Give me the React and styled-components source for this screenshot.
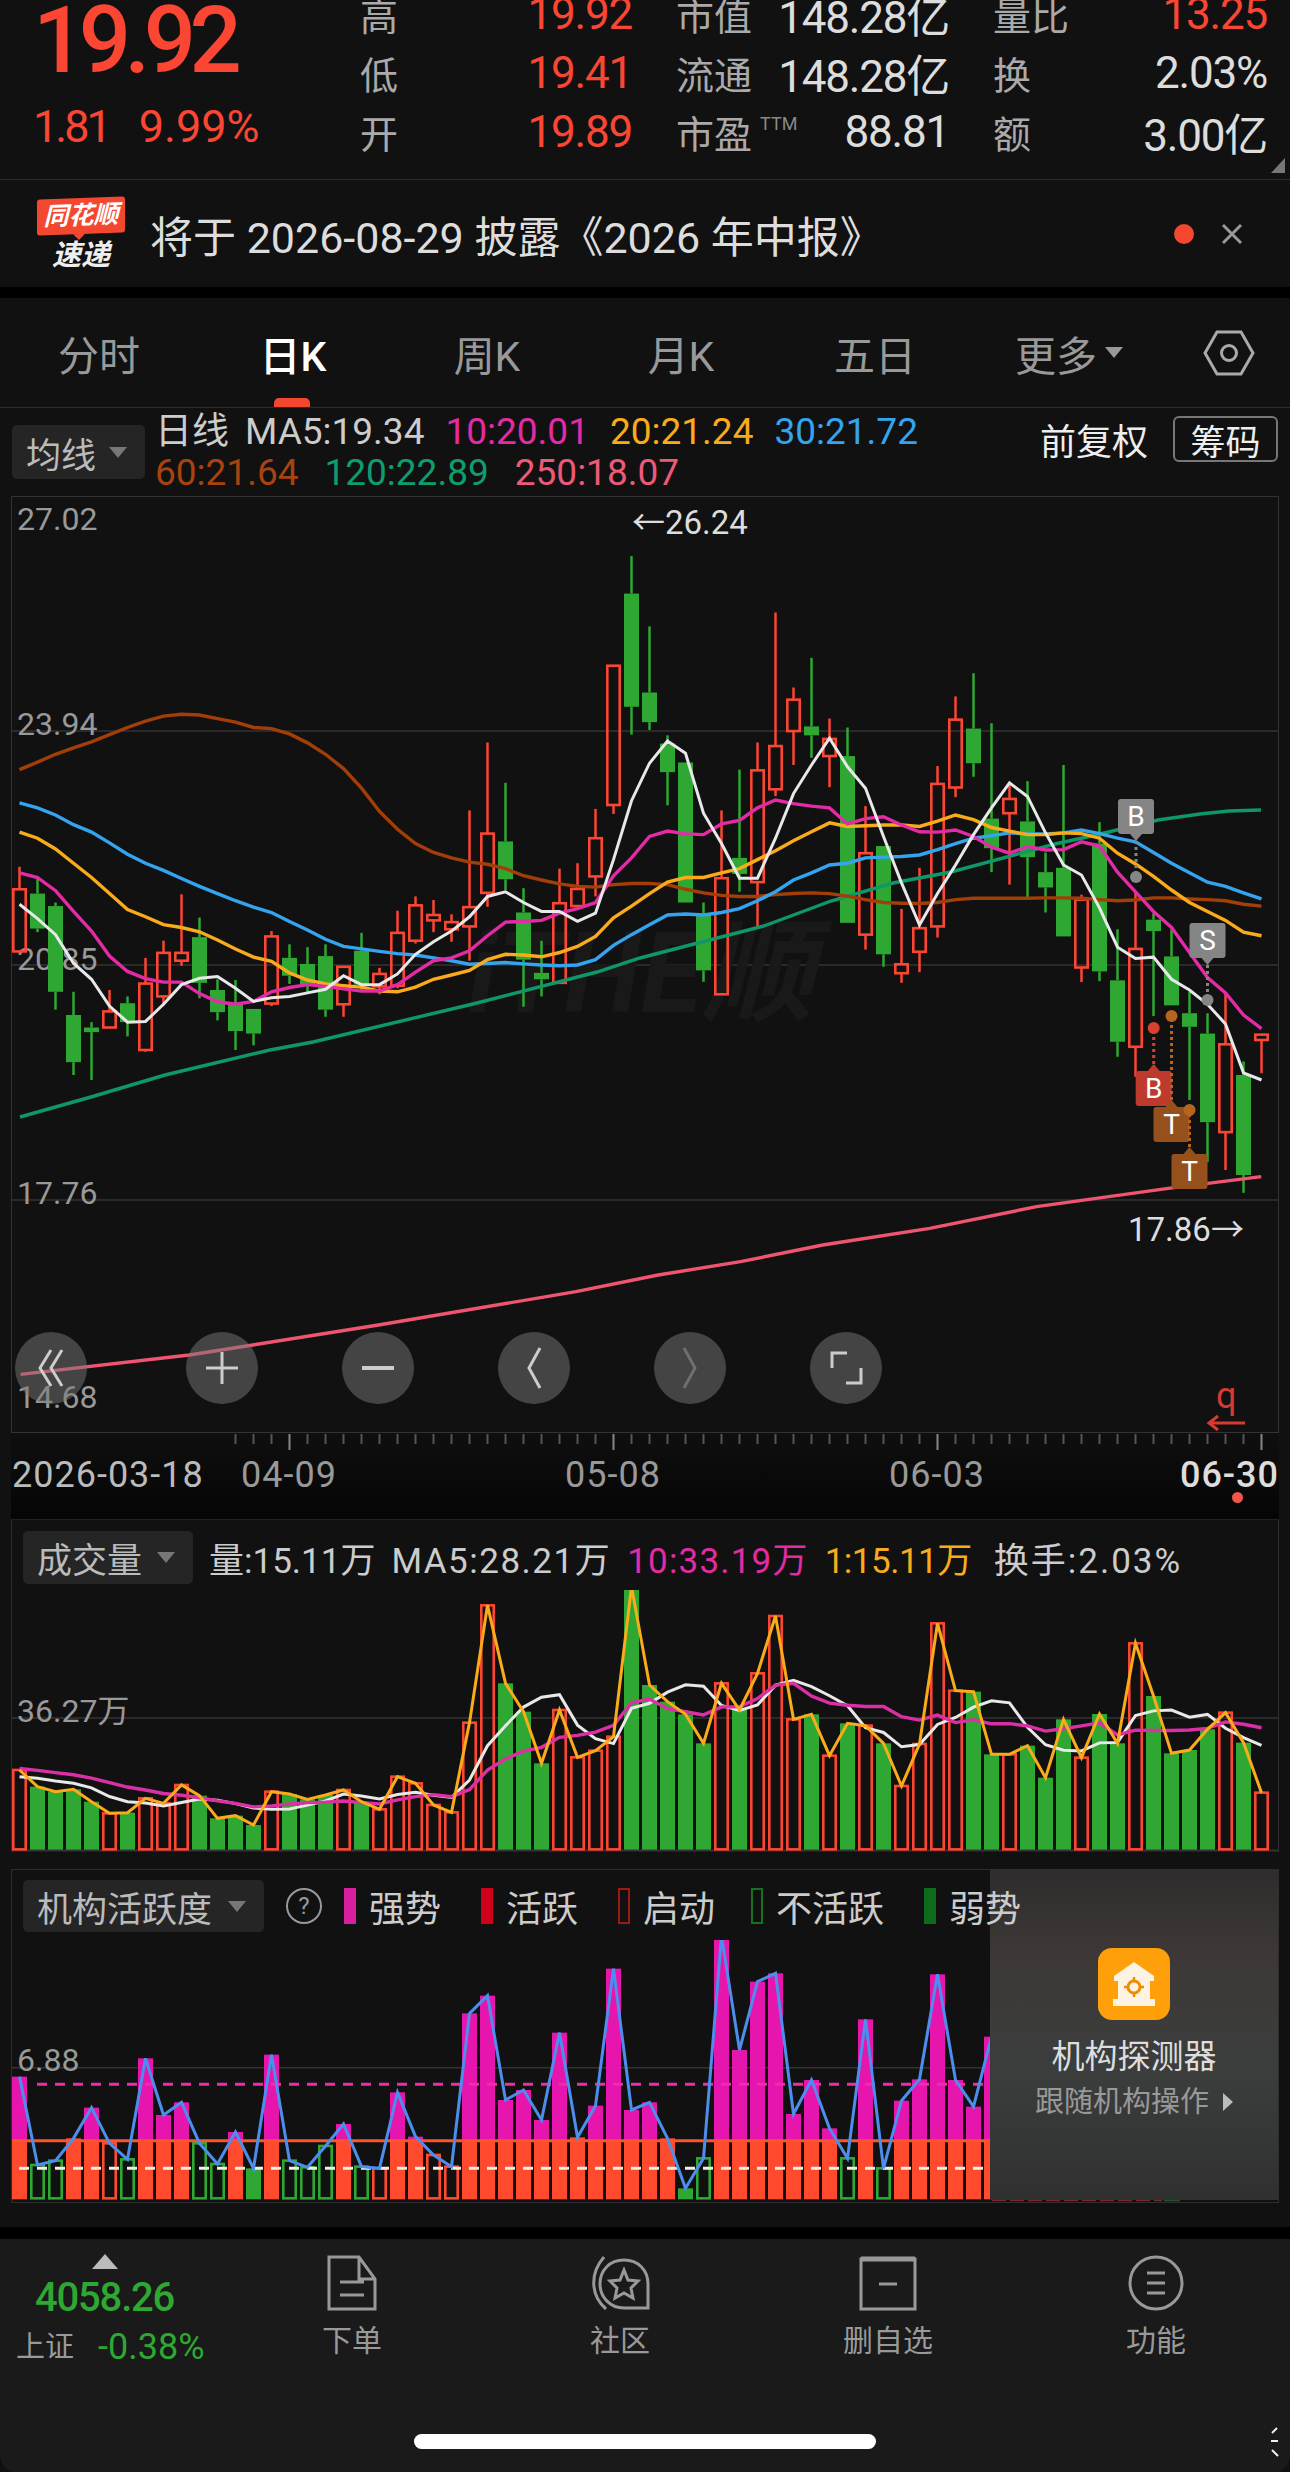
import React from "react";
import styled, { createGlobalStyle } from "styled-components";

// sampled from the screenshot: chart values are kept in crop units and mapped to page pixels
const cx = (i) => 19.5 + 18 * i;
const ky = (z) => 490 + z / 2.8;
const vy = (z) => 1520 + z / 3;
const ay = (z) => 1860 + z / 3;

const RED = "#fa4632";
const GREEN = "#2ea832";

const CANDLES = [
  ["r", 1055, 1118, 1292, 1292], ["g", 1085, 1130, 1228, 1238], ["g", 1155, 1165, 1405, 1455], ["g", 1405, 1470, 1602, 1638],
  ["g", 1490, 1505, 1518, 1652], ["r", 1400, 1460, 1505, 1505], ["g", 1418, 1437, 1490, 1530], ["r", 1310, 1382, 1568, 1573],
  ["r", 1262, 1296, 1418, 1443], ["r", 1132, 1296, 1318, 1332], ["g", 1197, 1252, 1380, 1423], ["g", 1370, 1400, 1462, 1485],
  ["g", 1372, 1440, 1515, 1568], ["g", 1453, 1453, 1522, 1555], ["r", 1235, 1250, 1438, 1445], ["g", 1272, 1310, 1360, 1383],
  ["g", 1280, 1327, 1385, 1410], ["g", 1272, 1305, 1455, 1475], ["r", 1335, 1335, 1440, 1475], ["g", 1240, 1290, 1385, 1400],
  ["r", 1338, 1355, 1390, 1412], ["r", 1178, 1240, 1388, 1395], ["r", 1138, 1163, 1262, 1270], ["r", 1148, 1190, 1205, 1238],
  ["r", 1188, 1210, 1230, 1265], ["r", 897, 1168, 1222, 1318], ["r", 707, 962, 1128, 1167], ["g", 820, 984, 1090, 1120],
  ["g", 1115, 1183, 1315, 1447], ["g", 1262, 1352, 1370, 1418], ["r", 1060, 1157, 1380, 1382], ["r", 1045, 1117, 1165, 1165],
  ["r", 893, 975, 1082, 1138], ["r", 492, 492, 882, 907], ["g", 185, 290, 607, 685], ["g", 382, 567, 650, 672],
  ["g", 687, 710, 790, 883], ["g", 763, 763, 1155, 1155], ["g", 1155, 1190, 1345, 1377], ["r", 897, 1087, 1412, 1412],
  ["g", 783, 1030, 1075, 1125], ["r", 707, 785, 1098, 1222], ["r", 343, 717, 838, 857], ["r", 553, 587, 675, 770],
  ["g", 470, 662, 687, 750], ["r", 640, 697, 745, 832], ["g", 665, 745, 1212, 1212], ["r", 885, 1017, 1245, 1287],
  ["g", 997, 997, 1300, 1335], ["r", 1173, 1328, 1353, 1380], ["r", 1058, 1227, 1293, 1350], ["r", 773, 823, 1222, 1253],
  ["r", 578, 643, 833, 860], ["g", 513, 668, 765, 803], ["g", 653, 920, 1003, 1070], ["r", 820, 865, 905, 1105],
  ["g", 815, 928, 1028, 1140], ["g", 1015, 1070, 1113, 1183], ["g", 770, 1058, 1250, 1250], ["r", 1133, 1147, 1337, 1378],
  ["g", 930, 990, 1348, 1375], ["g", 1230, 1373, 1545, 1587], ["r", 1125, 1285, 1559, 1643], ["g", 1185, 1203, 1235, 1473],
  ["g", 1230, 1306, 1443, 1443], ["g", 1405, 1465, 1503, 1708], ["g", 1465, 1522, 1770, 1882], ["r", 1405, 1552, 1798, 1904],
  ["g", 1600, 1638, 1918, 1968], ["r", 1525, 1525, 1540, 1633],
];

const MA5 = [1160,1200,1245,1325,1370,1445,1490,1488,1440,1385,1367,1362,1395,1432,1422,1418,1408,1398,1360,1385,1385,1355,1300,1265,1235,1195,1138,1125,1155,1180,1180,1208,1185,1035,870,765,703,737,905,990,1087,1087,975,850,770,695,775,835,970,1100,1218,1130,1050,965,890,820,858,960,1050,1078,1170,1280,1312,1308,1370,1400,1440,1495,1632,1652];
const MA10 = [1072,1085,1122,1180,1235,1305,1348,1368,1378,1378,1410,1433,1440,1432,1405,1393,1385,1390,1397,1403,1403,1385,1350,1318,1310,1290,1248,1210,1208,1205,1185,1172,1155,1080,1030,970,955,963,965,935,925,890,868,878,885,890,935,920,915,938,957,958,952,970,1000,1017,998,1008,1007,985,997,1070,1125,1180,1225,1295,1365,1408,1470,1508];
const MA20 = [958,975,1005,1045,1085,1130,1175,1195,1217,1225,1237,1260,1285,1308,1320,1352,1372,1383,1388,1392,1403,1405,1392,1370,1358,1345,1315,1300,1302,1307,1295,1278,1250,1198,1165,1130,1098,1085,1085,1072,1060,1035,1010,982,957,932,942,940,938,938,942,927,910,923,945,955,965,965,960,962,975,1017,1047,1082,1120,1155,1180,1205,1238,1248];
const MA30 = [876,890,910,937,958,988,1020,1045,1065,1088,1110,1130,1150,1168,1183,1208,1232,1258,1278,1285,1292,1298,1302,1310,1318,1328,1326,1323,1327,1330,1332,1330,1315,1275,1245,1217,1190,1187,1190,1183,1172,1150,1125,1092,1072,1050,1045,1030,1028,1026,1022,1007,990,975,968,960,963,963,960,952,962,975,985,1015,1045,1072,1098,1110,1128,1145];
const MA60 = [783,762,740,722,705,685,665,647,633,628,630,640,650,665,668,683,708,740,780,835,900,950,990,1015,1030,1042,1048,1060,1080,1092,1103,1110,1112,1105,1102,1102,1105,1118,1128,1135,1138,1138,1133,1130,1128,1130,1137,1147,1155,1157,1158,1155,1147,1143,1143,1143,1143,1142,1142,1143,1147,1150,1148,1142,1142,1145,1147,1150,1160,1165];
const MA120 = [[20,1117],[91,1097],[165,1075],[270,1050],[313,1042],[473,1004],[597,972],[640,958],[694,944],[764,926],[831,901],[893,883],[951,872],[1055,844],[1096,835],[1158,820],[1200,814],[1229,811],[1261,810]];
const MA250 = [[25,1003],[230,945],[460,855],[700,755],[800,705],[900,665],[1000,615],[1130,565],[1260,500],[1420,445],[1533,410]];

const VOL = [750,800,815,808,845,880,878,835,850,795,827,895,887,915,815,822,838,825,810,845,868,770,790,855,877,608,256,490,575,730,570,712,692,650,200,495,545,583,670,490,570,460,288,598,583,707,610,617,670,798,672,310,512,515,703,703,677,773,598,713,582,670,370,528,700,690,628,578,668,818];

// moving average of the bar tops, the pane's first bars lean on earlier days
const average = (list, n, seed) =>
  list.map((_, i) => {
    let sum = 0;
    for (let k = i - n + 1; k <= i; k++) sum += k >= 0 ? list[k] : seed ?? list[0];
    return sum / n;
  });
const VOL_MA5 = average(VOL, 5, 775);
const VOL_MA10 = average(VOL, 10, 745);

// p strong, s solid red, h hollow red, o hollow green, g solid green
const ACTIVITY = [
  ["p",650],["o",915],["o",902],["s",835],["p",743],["h",850],["o",898],["p",595],["p",765],["p",727],["o",850],["o",912],["p",816],["g",925],
  ["p",584],["o",902],["o",922],["o",858],["p",792],["o",920],["h",925],["p",697],["p",830],["h",885],["h",920],["p",460],["p",407],["p",720],
  ["p",690],["p",780],["p",518],["s",832],["p",737],["p",326],["p",750],["p",727],["s",835],["g",985],["o",895],["p",228],["p",570],["p",365],
  ["p",340],["p",762],["p",660],["p",805],["o",895],["p",478],["o",925],["p",722],["p",658],["p",343],["p",660],["p",740],["p",530],
];

const toPoints = (arr, fy) => arr.map((v, i) => `${cx(i)},${fy(v)}`).join(" ");

const GlobalStyle = createGlobalStyle`
  html, body { margin: 0; background: #000; }
  body {
    font-family: Roboto, "Noto Sans CJK SC", "Liberation Sans", sans-serif;
    color: #ccc;
  }
`;

const Page = styled.div`
  width: 1290px;
  height: 2472px;
  overflow: hidden;
  background: #111112;
`;

/* ---------- quote ---------- */
const Quote = styled.header`
  position: relative;
  display: flex;
  height: 179px;
  overflow: hidden;
  border-bottom: 1px solid #2c2c2c;
`;
const PriceBlock = styled.div`
  width: 360px;
  padding-left: 33px;
  box-sizing: border-box;
  flex: none;
`;
const BigPrice = styled.div`
  font-size: 92px;
  line-height: 82px;
  font-weight: 500;
  letter-spacing: -6.5px;
  color: ${RED};
`;
const Change = styled.div`
  display: flex;
  gap: 30px;
  margin-top: 22px;
  font-size: 45px;
  line-height: 46px;
  color: ${RED};
`;
const Tight = styled.span`
  letter-spacing: -3px;
`;
const QuoteGrid = styled.div`
  display: grid;
  grid-template-columns: 272px 273px 274px;
  grid-auto-rows: 59px;
  column-gap: 44px;
  margin-top: -16px;
`;
const Cell = styled.div`
  display: flex;
  align-items: center;
  justify-content: space-between;
`;
const CellLabel = styled.span`
  font-size: 38px;
  color: #aaa;
`;
const Ttm = styled.sup`
  margin-left: 8px;
  font-size: 18px;
  line-height: 0;
  color: #888;
  vertical-align: 18px;
`;
const CellValue = styled.span`
  font-size: 44px;
  letter-spacing: -1.2px;
  color: ${(p) => (p.$red ? RED : "#ddd")};
`;
const CornerMark = styled.i`
  position: absolute;
  right: 5px;
  bottom: 6px;
  border-left: 14px solid transparent;
  border-bottom: 15px solid #777;
`;

/* ---------- notice ---------- */
const Notice = styled.section`
  display: flex;
  align-items: center;
  height: 107px;
  padding: 0 46px 0 37px;
`;
const Logo = styled.div`
  width: 88px;
  flex: none;
  text-align: center;
`;
const LogoTop = styled.div`
  position: relative;
  height: 36px;
  border-radius: 3px;
  background: #f4472f;
  transform: skewY(-2deg);
  font-size: 25px;
  line-height: 36px;
  font-weight: 700;
  font-style: italic;
  color: #fff;
  &::after {
    content: "";
    position: absolute;
    left: 36px;
    bottom: -6px;
    border: 6px solid transparent;
    border-top-color: #f4472f;
    border-bottom: 0;
  }
`;
const LogoBottom = styled.div`
  margin-top: 6px;
  font-size: 29px;
  line-height: 30px;
  font-weight: 700;
  font-style: italic;
  color: #eee;
`;
const NoticeText = styled.div`
  margin-left: 25px;
  font-size: 43px;
  color: #ddd;
  white-space: nowrap;
`;
const NoticeDot = styled.i`
  width: 20px;
  height: 20px;
  margin-left: auto;
  border-radius: 50%;
  background: #f4472f;
`;
const NoticeClose = styled.svg`
  width: 24px;
  height: 24px;
  margin-left: 26px;
`;
const BlackGap = styled.div`
  height: ${(p) => p.$h}px;
  background: #000;
`;

/* ---------- tabs ---------- */
const TabRow = styled.nav`
  display: grid;
  grid-template-columns: repeat(6, 194px) 1fr;
  align-items: center;
  height: 109px;
  padding-left: 2px;
  border-bottom: 1px solid #2c2c2c;
`;
const Tab = styled.div`
  position: relative;
  display: flex;
  align-items: center;
  justify-content: center;
  gap: 8px;
  height: 109px;
  font-size: 41px;
  font-weight: ${(p) => (p.$active ? 500 : 400)};
  color: ${(p) => (p.$active ? "#fff" : "#999")};
  ${(p) =>
    p.$active &&
    `&::after {
      content: "";
      position: absolute;
      left: 78px;
      bottom: 0;
      width: 36px;
      height: 9px;
      border-radius: 5px 5px 0 0;
      background: #f4472f;
    }`}
`;
const Caret = styled.i`
  flex: none;
  border-left: ${(p) => p.$w}px solid transparent;
  border-right: ${(p) => p.$w}px solid transparent;
  border-top: ${(p) => p.$h}px solid ${(p) => p.$color || "#777"};
`;
const GearIcon = styled.svg`
  width: 52px;
  height: 48px;
  margin-left: 37px;
`;

/* ---------- legends ---------- */
const MaBar = styled.div`
  display: flex;
  height: 88px;
  padding: 0 12px;
  box-sizing: border-box;
`;
const Selector = styled.div`
  display: flex;
  align-items: center;
  justify-content: space-between;
  box-sizing: border-box;
  flex: none;
  height: ${(p) => p.$h}px;
  width: ${(p) => p.$w}px;
  padding: 0 18px 0 14px;
  border-radius: 5px;
  background: #252526;
  font-size: 35px;
  color: #bbb;
`;
const MaSelector = styled(Selector)`
  margin-top: 17px;
`;
const MaLines = styled.div`
  margin: 3px 0 0 10px;
`;
const MaLine = styled.div`
  display: flex;
  gap: ${(p) => p.$gap}px;
  font-size: 37px;
  line-height: 41px;
  white-space: nowrap;
`;
const Tinted = styled.span`
  color: ${(p) => p.$c};
`;
const MaName = styled.span`
  margin-right: -5px;
`;
const MaRight = styled.div`
  display: flex;
  align-items: center;
  gap: 25px;
  height: 46px;
  margin: 8px 0 0 auto;
  font-size: 36px;
  color: #eee;
`;
const ChipBox = styled.div`
  display: flex;
  align-items: center;
  justify-content: center;
  width: 105px;
  height: 46px;
  box-sizing: border-box;
  border: 2px solid #777;
  border-radius: 6px;
  font-size: 35px;
`;

/* ---------- k chart ---------- */
const KBox = styled.div`
  position: relative;
  height: 937px;
  margin: 0 11px;
  box-sizing: border-box;
  border: 1px solid #333;
`;
const ChartSvg = styled.svg`
  display: block;
  width: 1266px;
  height: ${(p) => p.$h}px;
`;
const ToolRow = styled.div`
  position: absolute;
  left: 3px;
  top: 835px;
  display: flex;
  gap: 84px;
`;
const ToolButton = styled.div`
  display: flex;
  align-items: center;
  justify-content: center;
  width: 72px;
  height: 72px;
  border-radius: 50%;
  background: rgba(120, 120, 120, 0.5);
  color: ${(p) => (p.$dim ? "#6f6f6f" : "#ccc")};
  &:first-child {
    margin-right: 15px;
  }
`;

/* ---------- time axis ---------- */
const Axis = styled.div`
  position: relative;
  height: 87px;
  box-sizing: border-box;
  margin: 0 11px;
  background: linear-gradient(#0f0f0f, #050505);
  border-bottom: 1px solid #222;
`;
const Ruler = styled.svg`
  display: block;
  width: 1268px;
  height: 18px;
`;
const AxisLabels = styled.div`
  display: grid;
  grid-template-columns: 115px 324px 324px 324px 1fr;
  margin-top: 2px;
  padding-left: 1px;
  font-size: 36px;
  letter-spacing: 1px;
  line-height: 44px;
  color: #999;
`;
const AxisLabel = styled.span`
  white-space: nowrap;
  text-align: ${(p) => p.$align || "center"};
  color: ${(p) => p.$color || "inherit"};
  font-weight: ${(p) => p.$weight || 400};
`;
const AxisDot = styled.i`
  position: absolute;
  right: 36px;
  bottom: 16px;
  width: 11px;
  height: 11px;
  border-radius: 50%;
  background: #f4554a;
`;

/* ---------- volume / activity panes ---------- */
const PaneWrap = styled.section`
  padding-bottom: ${(p) => p.$pad}px;
`;
const Pane = styled.div`
  position: relative;
  margin: 0 11px;
  border: solid #2e2e2e;
  border-width: ${(p) => (p.$top ? "1px 1px 1px" : "0 1px 0")};
`;
const PaneLegend = styled.div`
  position: relative;
  z-index: 2;
  display: flex;
  align-items: center;
  height: ${(p) => p.$h}px;
  box-sizing: border-box;
  padding: ${(p) => p.$pt}px 0 0 11px;
  font-size: 35px;
  color: #ccc;
  white-space: nowrap;
`;
const LegendItem = styled.span`
  margin-left: ${(p) => p.$ml ?? 16}px;
  letter-spacing: ${(p) => p.$ls ?? 0}px;
  color: ${(p) => p.$c || "inherit"};
`;
const ActivityLabel = styled.span`
  font-size: 36px;
`;
const Help = styled.i`
  display: flex;
  align-items: center;
  justify-content: center;
  width: 32px;
  height: 32px;
  margin-left: 22px;
  border: 2px solid #999;
  border-radius: 50%;
  font-size: 24px;
  font-style: normal;
  color: #999;
`;
const Swatch = styled.i`
  box-sizing: border-box;
  width: 12px;
  height: 36px;
  margin: 0 13px 0 ${(p) => p.$ml}px;
  background: ${(p) => (p.$hollow ? "transparent" : p.$c)};
  border: 2px solid ${(p) => p.$c};
`;
const Promo = styled.aside`
  position: absolute;
  top: 0;
  right: 0;
  bottom: 2px;
  display: flex;
  flex-direction: column;
  align-items: center;
  width: 288px;
  padding-top: 78px;
  box-sizing: border-box;
  background: linear-gradient(#2e2c2c, #3d3836 25%, #3b3e3d 60%, #303030);
`;
const PromoIcon = styled.div`
  display: flex;
  align-items: center;
  justify-content: center;
  width: 72px;
  height: 72px;
  border-radius: 14px;
  background: #ff9f0a;
`;
const PromoTitle = styled.div`
  margin-top: 15px;
  font-size: 33px;
  line-height: 44px;
  color: #ddd;
`;
const PromoSub = styled.div`
  display: flex;
  align-items: center;
  gap: 14px;
  margin-top: 3px;
  font-size: 29px;
  line-height: 40px;
  color: #999;
`;
const CaretRight = styled.i`
  border-top: 9px solid transparent;
  border-bottom: 9px solid transparent;
  border-left: 10px solid #bbb;
`;

/* ---------- bottom nav ---------- */
const BottomNav = styled.footer`
  position: relative;
  height: 234px;
  border-radius: 0 0 18px 18px;
  background: #1a1a1a;
`;
const NavRow = styled.div`
  display: grid;
  grid-template-columns: 218px repeat(4, 1fr);
  height: 195px;
`;
const IndexBlock = styled.div`
  padding: 15px 0 0 16px;
  white-space: nowrap;
`;
const IndexArrow = styled.i`
  display: block;
  width: 0;
  margin-left: 76px;
  border-left: 13px solid transparent;
  border-right: 13px solid transparent;
  border-bottom: 15px solid #bbb;
`;
const IndexValue = styled.div`
  margin: 4px 0 0 19px;
  font-size: 40px;
  line-height: 50px;
  font-weight: 500;
  letter-spacing: -1.2px;
  color: ${GREEN};
`;
const IndexLine = styled.div`
  display: flex;
  align-items: center;
  gap: 24px;
  margin-top: 4px;
  font-size: 29px;
  line-height: 40px;
  color: #999;
`;
const IndexChange = styled.span`
  font-size: 36px;
  color: ${GREEN};
`;
const NavItem = styled.div`
  display: flex;
  flex-direction: column;
  align-items: center;
  padding-top: 16px;
  font-size: 30px;
  color: #999;
`;
const NavIcon = styled.svg`
  height: 56px;
  margin-bottom: 5px;
`;
const HomeBar = styled.div`
  width: 462px;
  height: 15px;
  margin: 0 auto;
  border-radius: 8px;
  background: #fff;
`;
// sliver of the share watermark that sticks out at the corner of the screenshot
const CornerSliver = styled.svg`
  position: absolute;
  right: 10px;
  bottom: 16px;
  width: 12px;
  height: 30px;
`;

/* ---------- chart drawings ---------- */
const Candle = ({ c, i }) => {
  const [kind, hi, top, bot, lo] = c;
  const x = cx(i);
  const color = kind === "r" ? RED : GREEN;
  return (
    <g>
      <line x1={x} x2={x} y1={ky(hi)} y2={ky(top)} stroke={color} strokeWidth="2.5" />
      <line x1={x} x2={x} y1={ky(bot)} y2={ky(lo)} stroke={color} strokeWidth="2.5" />
      {kind === "r" ? (
        <rect x={x - 6.2} y={ky(top)} width="12.4" height={Math.max(ky(bot) - ky(top), 2)} fill="none" stroke={color} strokeWidth="2.6" />
      ) : (
        <rect x={x - 7.5} y={ky(top)} width="15" height={ky(bot) - ky(top)} fill={color} />
      )}
    </g>
  );
};

const Marker = ({ x, top, dot, label, color, dotColor, below }) => {
  const boxH = 35;
  const tip = below ? top + boxH + 7 : top - 7;
  const edge = below ? top + boxH : top;
  return (
    <g>
      <line x1={x} x2={x} y1={tip} y2={dot} stroke={dotColor} strokeWidth="3" strokeDasharray="3 3" />
      <circle cx={x} cy={dot} r="6" fill={dotColor} />
      <path d={`M${x - 6} ${edge} L${x} ${tip} L${x + 6} ${edge} Z`} fill={color} />
      <rect x={x - 18} y={top} width="36" height={boxH} rx="3" fill={color} />
      <text x={x} y={top + 27} textAnchor="middle" fontSize="28" fill="#fff">{label}</text>
    </g>
  );
};

const PriceLabel = ({ y, children, color = "#999", x = 17 }) => (
  <text x={x} y={y} fontSize="32" fill={color}>{children}</text>
);

const KChart = () => (
  <ChartSvg $h={935} viewBox="12 497 1266 935">
    <line x1="12" x2="1279" y1="731" y2="731" stroke="#333" strokeWidth="1.5" />
    <line x1="12" x2="1279" y1="965" y2="965" stroke="#333" strokeWidth="1.5" />
    <line x1="12" x2="1279" y1="1200" y2="1200" stroke="#333" strokeWidth="1.5" />
    <text x="468" y="1012" fontSize="112" fontWeight="700" fontStyle="italic" fill="#19191a">iTHE顺</text>
    <PriceLabel y={530}>27.02</PriceLabel>
    <PriceLabel y={735}>23.94</PriceLabel>
    <PriceLabel y={970}>20.85</PriceLabel>
    <PriceLabel y={1204}>17.76</PriceLabel>
    <PriceLabel y={1408}>14.68</PriceLabel>
    {CANDLES.map((c, i) => <Candle key={i} c={c} i={i} />)}
    <polyline points={MA120.map((p) => p.join(",")).join(" ")} fill="none" stroke="#0f9768" strokeWidth="3.4" />
    <polyline points={MA250.map(([x, z]) => `${x / 1.2155},${1040 + z / 3}`).join(" ")} fill="none" stroke="#ef5570" strokeWidth="3.4" />
    <polyline points={toPoints(MA60, ky)} fill="none" stroke="#a23e07" strokeWidth="3.4" />
    <polyline points={toPoints(MA30, ky)} fill="none" stroke="#35a4ee" strokeWidth="3.4" />
    <polyline points={toPoints(MA20, ky)} fill="none" stroke="#f9ab1b" strokeWidth="3.4" />
    <polyline points={toPoints(MA10, ky)} fill="none" stroke="#e22ba5" strokeWidth="3.4" />
    <polyline points={toPoints(MA5, ky)} fill="none" stroke="#e8e8e8" strokeWidth="3" />
    <Marker x={1136} top={799} dot={877} label="B" color="#858585" dotColor="#858585" below />
    <Marker x={1207.5} top={923} dot={1000} label="S" color="#858585" dotColor="#858585" below />
    <Marker x={1153.7} top={1071} dot={1028} label="B" color="#bd3a2c" dotColor="#d8412f" />
    <Marker x={1171.5} top={1107} dot={1016} label="T" color="#96501c" dotColor="#b5651d" />
    <Marker x={1189.5} top={1154} dot={1110} label="T" color="#96501c" dotColor="#b5651d" />
    <text x="632" y="534" fontSize="33" fill="#ddd">←26.24</text>
    <text x="1128" y="1241" fontSize="33" fill="#ddd">17.86→</text>
    <text x="1216" y="1408" fontSize="36" fill="#d83a2f">q</text>
    <path d="M1245 1423H1209M1218 1416L1209 1423L1218 1430" fill="none" stroke="#d83a2f" strokeWidth="3" />
  </ChartSvg>
);

const VolumeBars = () => (
  <ChartSvg $h={262} viewBox="12 1590 1266 262">
    <line x1="12" x2="1279" y1="1718" y2="1718" stroke="#333" strokeWidth="1.5" />
    <line x1="12" x2="1279" y1="1850.5" y2="1850.5" stroke="#333" strokeWidth="2" />
    <text x="17" y="1722" fontSize="32" fill="#999">36.27万</text>
    {VOL.map((z, i) =>
      CANDLES[i][0] === "r" ? (
        <rect key={i} x={cx(i) - 6.2} y={vy(z)} width="12.4" height={vy(988) - vy(z)} fill="none" stroke={RED} strokeWidth="2.6" />
      ) : (
        <rect key={i} x={cx(i) - 7.5} y={vy(z)} width="15" height={vy(989) - vy(z)} fill={GREEN} />
      )
    )}
    <polyline points={toPoints(VOL_MA5, vy)} fill="none" stroke="#e8e8e8" strokeWidth="3" />
    <polyline points={toPoints(VOL_MA10, vy)} fill="none" stroke="#dd2fa5" strokeWidth="3.4" />
    <polyline points={toPoints(VOL, vy)} fill="none" stroke="#f9ab1b" strokeWidth="3" />
  </ChartSvg>
);

const ActivityBar = ({ item, i }) => {
  const [kind, z] = item;
  const x = cx(i);
  const base = ay(1018);
  const line = ay(842);
  if (kind === "p") {
    return (
      <g>
        <rect x={x - 7.5} y={ay(z)} width="15" height={line - ay(z)} fill="#e615ad" />
        <rect x={x - 7.5} y={line} width="15" height={base - line} fill="#ff4a2d" />
      </g>
    );
  }
  if (kind === "s" || kind === "g") {
    return <rect x={x - 7.5} y={ay(z)} width="15" height={base - ay(z)} fill={kind === "s" ? "#ff4a2d" : GREEN} />;
  }
  return (
    <rect x={x - 6.2} y={ay(z)} width="12.4" height={base - ay(z) - 1} fill="none" stroke={kind === "h" ? "#ff4a2d" : GREEN} strokeWidth="2.6" />
  );
};

const ActivityBars = () => (
  <ChartSvg $h={262} viewBox="12 1940 1266 262">
    <line x1="12" x2="1279" y1="2067.7" y2="2067.7" stroke="#333" strokeWidth="1.5" />
    <text x="17" y="2071" fontSize="32" fill="#999">6.88</text>
    {ACTIVITY.map((item, i) => <ActivityBar key={i} item={item} i={i} />)}
    <line x1="12" x2="990" y1="2140.7" y2="2140.7" stroke="#f9552f" strokeWidth="3" />
    <line x1="37" x2="990" y1="2084.3" y2="2084.3" stroke="#ec2ea8" strokeWidth="3" strokeDasharray="10 8" />
    <line x1="19" x2="983" y1="2168.3" y2="2168.3" stroke="#f4efe6" strokeWidth="3" strokeDasharray="10 8" />
    <polyline points={toPoints(ACTIVITY.map((a) => a[1]), ay)} fill="none" stroke="#4d8eed" strokeWidth="3" />
    <line x1="992" x2="1162" y1="2200.6" y2="2200.6" stroke="#7a2a20" strokeWidth="1.5" strokeDasharray="14 4" />
    <line x1="1164" x2="1180" y1="2200.6" y2="2200.6" stroke="#23552a" strokeWidth="1.5" />
  </ChartSvg>
);

const Ticks = () => (
  <Ruler viewBox="11 1433 1268 18">
    {Array.from({ length: 58 }, (_, k) => {
      const x = 1261.5 - 18 * k;
      const major = k % 18 === 0;
      return <line key={k} x1={x} x2={x} y1="1434" y2={major ? 1450 : 1444} stroke={major ? "#888" : "#555"} strokeWidth="2" />;
    })}
  </Ruler>
);

const iconLine = { fill: "none", stroke: "currentColor", strokeWidth: 3 };

const TOOLS = [
  { d: "M17 6L6 24L17 42M28 6L17 24L28 42", w: 34, h: 48 },
  { d: "M16 0V32M0 16H32", w: 32, h: 32 },
  { d: "M0 2H32", w: 32, h: 4, sw: 4 },
  { d: "M14 4L3 24L14 44", w: 16, h: 48 },
  { d: "M2 4L13 24L2 44", w: 16, h: 48, dim: true },
  { d: "M3 18V3H18M32 18V33H17", w: 35, h: 36 },
];

const ToolIcons = () => (
  <ToolRow>
    {TOOLS.map((t, i) => (
      <ToolButton key={i} $dim={t.dim}>
        <svg width={t.w} height={t.h} viewBox={`0 0 ${t.w} ${t.h}`}>
          <path d={t.d} {...iconLine} strokeWidth={t.sw || 3} />
        </svg>
      </ToolButton>
    ))}
  </ToolRow>
);

const LEGEND_SWATCHES = [
  { c: "#d81fa0", ml: 22, text: "强势" },
  { c: "#d0021b", ml: 40, text: "活跃" },
  { c: "#9c1a10", ml: 40, text: "启动", hollow: true },
  { c: "#15711f", ml: 36, text: "不活跃", hollow: true },
  { c: "#0d6b1c", ml: 40, text: "弱势" },
];

const QUOTE_CELLS = [
  ["高", "19.92", true], ["市值", "148.28亿"], ["量比", "13.25", true],
  ["低", "19.41", true], ["流通", "148.28亿"], ["换", "2.03%"],
  ["开", "19.89", true], ["市盈", "88.81", false, true], ["额", "3.00亿"],
];

export default function App() {
  return (
    <Page>
      <GlobalStyle />
      <Quote>
        <PriceBlock>
          <BigPrice>19.92</BigPrice>
          <Change><Tight>1.81</Tight><span>9.99%</span></Change>
        </PriceBlock>
        <QuoteGrid>
          {QUOTE_CELLS.map(([label, value, red, ttm]) => (
            <Cell key={label}>
              <CellLabel>{label}{ttm && <Ttm>TTM</Ttm>}</CellLabel>
              <CellValue $red={red}>{value}</CellValue>
            </Cell>
          ))}
        </QuoteGrid>
        <CornerMark />
      </Quote>

      <Notice>
        <Logo>
          <LogoTop>同花顺</LogoTop>
          <LogoBottom>速递</LogoBottom>
        </Logo>
        <NoticeText>将于 2026-08-29 披露《2026 年中报》</NoticeText>
        <NoticeDot />
        <NoticeClose viewBox="0 0 24 24">
          <path d="M3 3L21 21M21 3L3 21" stroke="#999" strokeWidth="3" />
        </NoticeClose>
      </Notice>
      <BlackGap $h={11} />

      <TabRow>
        <Tab>分时</Tab>
        <Tab $active>日K</Tab>
        <Tab>周K</Tab>
        <Tab>月K</Tab>
        <Tab>五日</Tab>
        <Tab>更多<Caret $w={9} $h={11} $color="#999" /></Tab>
        <GearIcon viewBox="0 0 52 48">
          <path d="M14 3H38L50 24L38 45H14L2 24Z" fill="none" stroke="#aaa" strokeWidth="3" />
          <circle cx="26" cy="24" r="7.5" fill="none" stroke="#aaa" strokeWidth="3" />
        </GearIcon>
      </TabRow>

      <MaBar>
        <MaSelector $w={133} $h={54}>均线<Caret $w={9} $h={11} /></MaSelector>
        <MaLines>
          <MaLine $gap={21}>
            <MaName>日线</MaName>
            <span>MA5:19.34</span>
            <Tinted $c="#e22ba5">10:20.01</Tinted>
            <Tinted $c="#f9ab1b">20:21.24</Tinted>
            <Tinted $c="#35a4ee">30:21.72</Tinted>
          </MaLine>
          <MaLine $gap={26}>
            <Tinted $c="#a8430f">60:21.64</Tinted>
            <Tinted $c="#0f9d6e">120:22.89</Tinted>
            <Tinted $c="#ed5a78">250:18.07</Tinted>
          </MaLine>
        </MaLines>
        <MaRight>
          <span>前复权</span>
          <ChipBox>筹码</ChipBox>
        </MaRight>
      </MaBar>

      <KBox>
        <KChart />
        <ToolIcons />
      </KBox>

      <Axis>
        <Ticks />
        <AxisLabels>
          <AxisLabel $align="left" $color="#bbb">2026-03-18</AxisLabel>
          <AxisLabel>04-09</AxisLabel>
          <AxisLabel>05-08</AxisLabel>
          <AxisLabel>06-03</AxisLabel>
          <AxisLabel $align="right" $color="#ddd" $weight={500}>06-30</AxisLabel>
        </AxisLabels>
        <AxisDot />
      </Axis>

      <PaneWrap $pad={17}>
        <Pane>
          <PaneLegend $h={70} $pt={5}>
            <Selector $w={170} $h={53}>成交量<Caret $w={9} $h={11} /></Selector>
            <LegendItem>量:15.11万</LegendItem>
            <LegendItem $ls={1.5}>MA5:28.21万</LegendItem>
            <LegendItem $ls={1.2} $c="#e22ba5">10:33.19万</LegendItem>
            <LegendItem $ls={-0.5} $c="#f9ab1b">1:15.11万</LegendItem>
            <LegendItem $ml={22} $ls={2}>换手:2.03%</LegendItem>
          </PaneLegend>
          <VolumeBars />
        </Pane>
      </PaneWrap>

      <PaneWrap $pad={24}>
        <Pane $top>
          <PaneLegend $h={70} $pt={2}>
            <Selector $w={241} $h={52}>机构活跃度<Caret $w={9} $h={11} /></Selector>
            <Help>?</Help>
            {LEGEND_SWATCHES.map((s) => (
              <React.Fragment key={s.text}>
                <Swatch $c={s.c} $ml={s.ml} $hollow={s.hollow} />
                <ActivityLabel>{s.text}</ActivityLabel>
              </React.Fragment>
            ))}
          </PaneLegend>
          <ActivityBars />
          <Promo>
            <PromoIcon>
              <svg width="46" height="46" viewBox="0 0 46 46">
                <path d="M23 1L43 15V20H39V38H44V45H2V38H7V20H3V15Z" fill="#fdf3e3" />
                <circle cx="23" cy="26" r="6" fill="none" stroke="#f08c00" strokeWidth="3" />
                <path d="M23 16V21M23 31V36M13 26H18M28 26H33" stroke="#f08c00" strokeWidth="2.5" />
              </svg>
            </PromoIcon>
            <PromoTitle>机构探测器</PromoTitle>
            <PromoSub>跟随机构操作<CaretRight /></PromoSub>
          </Promo>
        </Pane>
      </PaneWrap>
      <BlackGap $h={12} />

      <BottomNav>
        <NavRow>
          <IndexBlock>
            <IndexArrow />
            <IndexValue>4058.26</IndexValue>
            <IndexLine>上证<IndexChange>-0.38%</IndexChange></IndexLine>
          </IndexBlock>
          <NavItem>
            <NavIcon width="50" viewBox="0 0 50 56">
              <path d="M2 2H32L48 24V54H2Z M32 2V24H48 M13 27H37 M13 40H37" {...iconLine} />
            </NavIcon>
            下单
          </NavItem>
          <NavItem>
            <NavIcon width="60" viewBox="0 0 60 56">
              <path d="M14 2C0 18 0 40 16 54" {...iconLine} />
              <path d="M58 53H34C20 53 10 42 10 29C10 15 20 5 34 5C48 5 58 15 58 29Z" {...iconLine} />
              <path d="M34 15L38 25L48 26L41 33L43 43L34 38L25 43L27 33L20 26L30 25Z" {...iconLine} />
            </NavIcon>
            社区
          </NavItem>
          <NavItem>
            <NavIcon width="58" viewBox="0 0 58 56">
              <path d="M2 4H56V54H2Z" {...iconLine} />
              <path d="M2 4H56" {...iconLine} strokeWidth="5" />
              <path d="M20 29H38" {...iconLine} />
            </NavIcon>
            删自选
          </NavItem>
          <NavItem>
            <NavIcon width="56" viewBox="0 0 56 56">
              <circle cx="28" cy="28" r="26" {...iconLine} />
              <path d="M19 18H37M19 28H37M19 38H37" {...iconLine} />
            </NavIcon>
            功能
          </NavItem>
        </NavRow>
        <HomeBar />
        <CornerSliver viewBox="0 0 12 30">
          <path d="M9 1L4 6M3 14H10M4 23L10 29" stroke="#eee" strokeWidth="2" fill="none" />
        </CornerSliver>
      </BottomNav>
    </Page>
  );
}
